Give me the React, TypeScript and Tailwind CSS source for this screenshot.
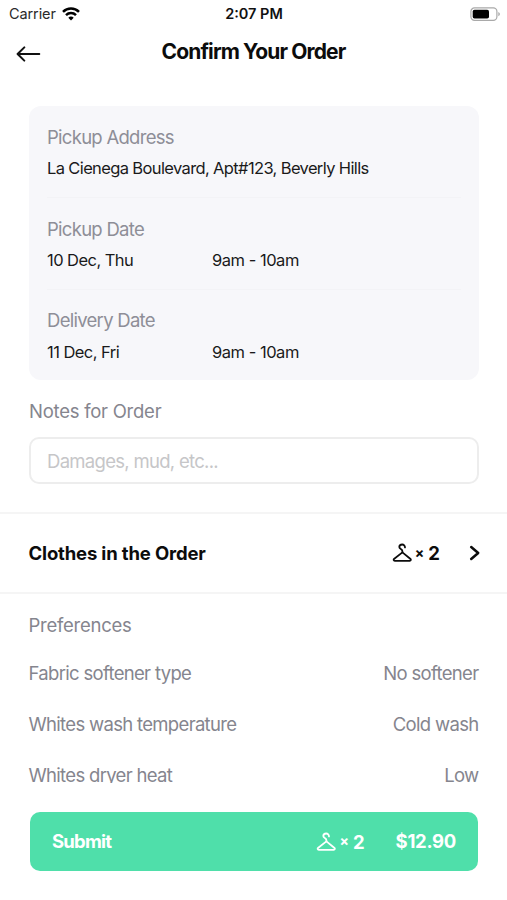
import React from "react";

const preferences = [
  { label: "Fabric softener type", value: "No softener" },
  { label: "Whites wash temperature", value: "Cold wash" },
  { label: "Whites dryer heat", value: "Low" },
];

const HangerIcon = () => (
  <svg width="20" height="20" viewBox="0 0 20 20" fill="none" stroke="currentColor" strokeWidth="1.8" strokeLinecap="round" strokeLinejoin="round">
    <path d="M13 4.4C13 2.7 11.8 1.5 10.2 1.5C8.5 1.5 7.3 2.6 7.3 4.1C7.3 6.5 10.4 5.6 10.4 8.3V9.4" />
    <path d="M10.4 9.4L2.3 15.7C1.2 16.6 1.6 17.9 2.8 17.9H17.7C18.9 17.9 19.3 16.6 18.2 15.7L10.4 9.4Z" />
  </svg>
);

const StatusBar = () => (
  <div className="flex h-[27px] items-center justify-between pl-[9px] pr-[6px]">
    <div className="flex w-[100px] items-center gap-[6px]">
      <span className="text-[14.5px] tracking-[-0.1px] text-[#2a2a2a]">Carrier</span>
      <svg width="18" height="14" viewBox="0 0 18 14" fill="none" stroke="#000" strokeWidth="2.5">
        <path d="M1 4.9C5.4 0.5 12.6 0.5 17 4.9" />
        <path d="M4 8.1C6.8 5.4 11.2 5.4 14 8.1" />
        <path d="M9 13.4L6.3 10.7C7.8 9.2 10.2 9.2 11.7 10.7Z" fill="#000" stroke="none" />
      </svg>
    </div>
    <span className="mr-[2px] text-[14.5px] font-semibold text-[#111]">2:07 PM</span>
    <div className="flex w-[100px] justify-end">
      <svg width="31" height="14" viewBox="0 0 31 14">
        <rect x="0.9" y="0.9" width="26" height="12.4" rx="3.6" fill="none" stroke="#a9a9a9" strokeWidth="1.2" />
        <rect x="2.7" y="2.7" width="16.3" height="8.8" rx="1.8" fill="#000" />
        <path d="M28.3 5C30.4 5.8 30.4 8.4 28.3 9.2Z" fill="#a9a9a9" />
      </svg>
    </div>
  </div>
);

const Header = () => (
  <header className="grid h-12 grid-cols-[60px_1fr_60px] items-center">
    <button className="pl-4 pt-[5px]">
      <svg width="25" height="16" viewBox="0 0 25 16" fill="none" stroke="#111" strokeWidth="2" strokeLinecap="round" strokeLinejoin="round">
        <path d="M23.3 8H1.8M8.3 1.4L1.6 8L8.3 14.6" />
      </svg>
    </button>
    <h1 className="pt-px text-center text-[21px] font-bold tracking-[-0.88px] text-[#0c0c0c]">Confirm Your Order</h1>
  </header>
);

const CardLabel = ({ children }: { children: React.ReactNode }) => (
  <div className="text-[18.5px] leading-6 tracking-[-0.72px] text-[#8e8e97]">{children}</div>
);

const Count = () => (
  <div className="flex items-center">
    <HangerIcon />
    <span className="mb-px ml-[3px] text-[14px] font-bold leading-6">×</span>
    <span className="ml-[4px] text-[18.5px] font-bold leading-6">2</span>
  </div>
);

const OrderCard = () => (
  <div className="mx-[29px] mt-[31px] h-[274px] w-[450px] rounded-xl bg-[#f7f7fa] px-[18px] text-[16.5px] tracking-[-0.55px] text-[#1a1a1a]">
    <div className="h-[92px] border-b border-[#f3f3f6] pt-[19px]">
      <CardLabel>Pickup Address</CardLabel>
      <div className="mt-[7px] leading-6 tracking-[-0.63px]">La Cienega Boulevard, Apt#123, Beverly Hills</div>
    </div>
    <div className="h-[92px] border-b border-[#f3f3f6] pt-[19px]">
      <CardLabel>Pickup Date</CardLabel>
      <div className="mt-[7px] flex leading-6">
        <span className="w-[165px]">10 Dec, Thu</span>
        <span className="tracking-[-0.48px]">9am - 10am</span>
      </div>
    </div>
    <div className="pt-[18px]">
      <CardLabel>Delivery Date</CardLabel>
      <div className="mt-[8px] flex leading-6">
        <span className="w-[165px]">11 Dec, Fri</span>
        <span className="tracking-[-0.48px]">9am - 10am</span>
      </div>
    </div>
  </div>
);

export default function App() {
  return (
    <div className="flex h-[900px] w-[507px] flex-col bg-white font-['Inter',sans-serif]">
      <StatusBar />
      <Header />
      <main className="h-[708px] overflow-hidden">
        <OrderCard />
        <section className="mx-[29px] mt-[19px]">
          <div className="text-[18.5px] leading-6 tracking-[-0.25px] text-[#85858e]">Notes for Order</div>
          <input
            placeholder="Damages, mud, etc..."
            className="mt-[14px] block h-[47px] w-[450px] rounded-[10px] border-2 border-[#ededed] px-[16px] text-[18.5px] tracking-[-0.7px] placeholder:text-[#c6c6c8]"
          />
        </section>
        <section className="mt-7 flex h-[82px] items-center border-y-2 border-[#f5f5f5] pl-[28.5px] pr-[26px] text-[#0c0c0c]">
          <h2 className="flex-1 pt-px text-[18.5px] font-bold tracking-[-0.16px]">Clothes in the Order</h2>
          <Count />
          <svg className="ml-[29px]" width="12" height="16" viewBox="0 0 12 16" fill="none" stroke="currentColor" strokeWidth="2.5" strokeLinecap="round" strokeLinejoin="round">
            <path d="M2.2 2L9.2 8L2.2 14" />
          </svg>
        </section>
        <section className="px-[28.5px] pt-[19px] text-[18.5px] leading-6 text-[#85858e]">
          <div className="tracking-[-0.25px]">Preferences</div>
          <div className="mt-6 flex flex-col gap-[27px] tracking-[-0.68px]">
            {preferences.map((p) => (
              <div key={p.label} className="flex justify-between">
                <span>{p.label}</span>
                <span>{p.value}</span>
              </div>
            ))}
          </div>
        </section>
      </main>
      <button className="mx-[30px] mt-[29px] flex h-[59px] w-[448px] shrink-0 items-center rounded-[10px] bg-[#4fdfaa] px-[22px] text-[18.5px] font-bold text-white">
        <span className="flex-1 text-left tracking-[-0.8px]">Submit</span>
        <Count />
        <span className="ml-[31px] tracking-[-0.3px]">$12.90</span>
      </button>
    </div>
  );
}
